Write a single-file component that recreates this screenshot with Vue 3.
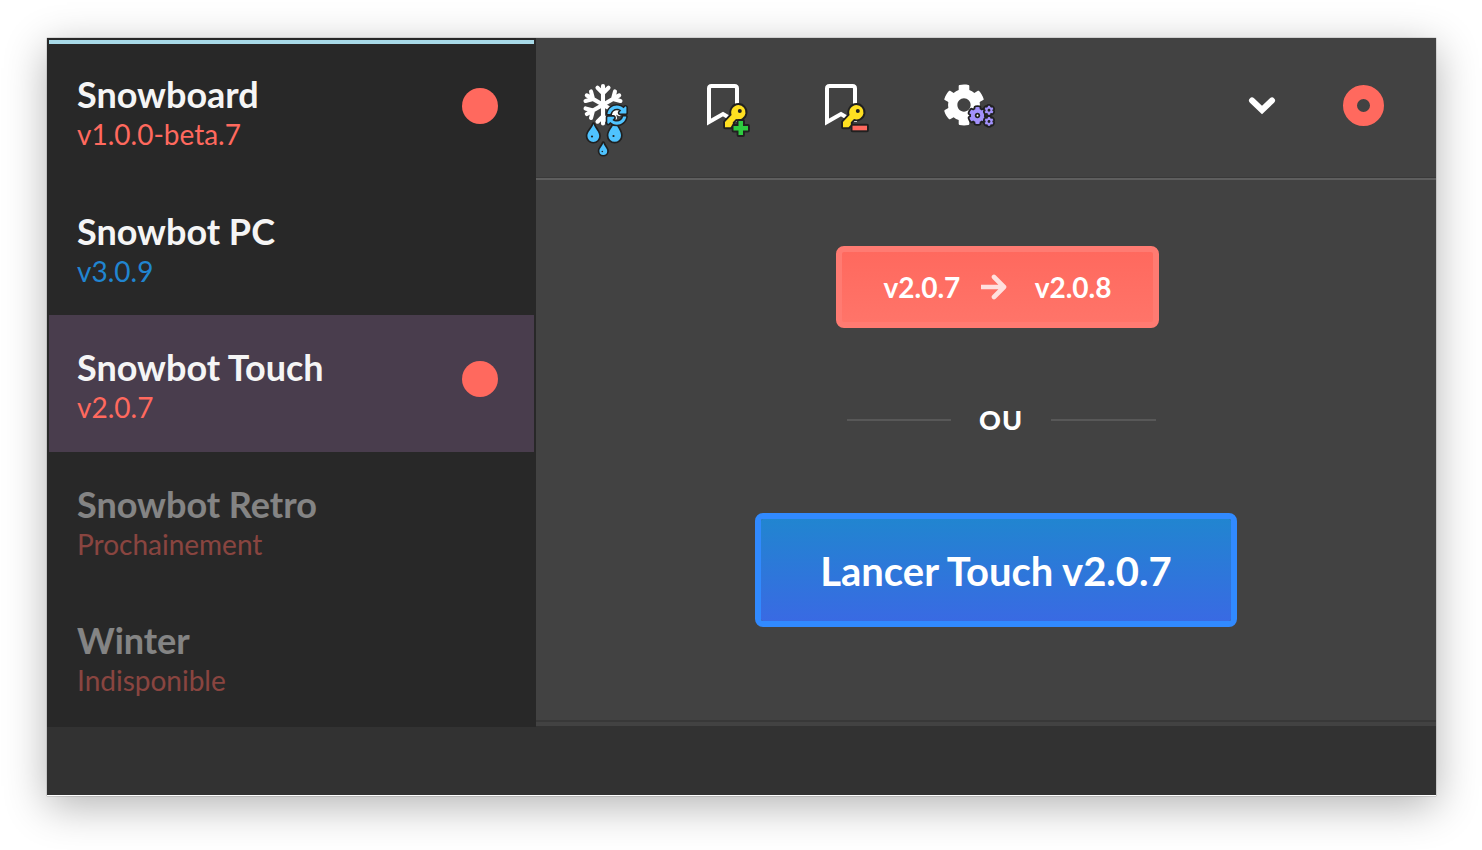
<script setup>
import { ref } from 'vue'

const games = [
  { name: 'Snowboard', version: 'v1.0.0-beta.7', update: true },
  { name: 'Snowbot PC', version: 'v3.0.9', current: true },
  { name: 'Snowbot Touch', version: 'v2.0.7', update: true },
  { name: 'Snowbot Retro', version: 'Prochainement', disabled: true },
  { name: 'Winter', version: 'Indisponible', disabled: true },
]
const selected = ref('Snowbot Touch')

const arms = [0, 60, 120, 180, 240, 300]
const cog =
  'M487.4 315.7l-42.6-24.6c4.3-23.2 4.3-47 0-70.2l42.6-24.6c4.9-2.8 7.1-8.6 5.5-14-11.1-35.6-30-67.8-54.7-94.6-3.8-4.1-10-5.1-14.8-2.3L380.8 110c-17.9-15.4-38.5-27.3-60.8-35.1V25.8c0-5.6-3.9-10.5-9.4-11.7-36.7-8.2-74.3-7.8-109.2 0-5.5 1.2-9.4 6.1-9.4 11.7V75c-22.2 7.9-42.8 19.8-60.8 35.1L88.7 85.5c-4.9-2.8-11-1.9-14.8 2.3-24.7 26.7-43.6 58.9-54.7 94.6-1.7 5.4.6 11.2 5.5 14L67.3 221c-4.3 23.2-4.3 47 0 70.2l-42.6 24.6c-4.9 2.8-7.1 8.6-5.5 14 11.1 35.6 30 67.8 54.7 94.6 3.8 4.1 10 5.1 14.8 2.3l42.6-24.6c17.9 15.4 38.5 27.3 60.8 35.1v49.2c0 5.6 3.9 10.5 9.4 11.7 36.7 8.2 74.3 7.8 109.2 0 5.5-1.2 9.4-6.1 9.4-11.7v-49.2c22.2-7.9 42.8-19.8 60.8-35.1l42.6 24.6c4.9 2.8 11 1.9 14.8-2.3 24.7-26.7 43.6-58.9 54.7-94.6 1.5-5.5-.7-11.3-5.6-14.1zM256 336c-44.1 0-80-35.9-80-80s35.9-80 80-80 80 35.9 80 80-35.9 80-80 80z'
const sync =
  'M370.72 133.28C339.458 104.008 298.888 87.962 255.848 88c-77.458.068-144.328 53.178-162.791 126.85-1.344 5.363-6.122 9.15-11.651 9.15H24.103c-7.498 0-13.194-6.807-11.807-14.176C33.933 94.924 134.813 8 256 8c66.448 0 126.791 26.136 171.315 68.685L463.03 40.97C478.149 25.851 504 36.559 504 57.941V192c0 13.255-10.745 24-24 24H345.941c-21.382 0-32.09-25.851-16.971-40.971l41.75-41.749zM32 296h134.059c21.382 0 32.09 25.851 16.971 40.971l-41.75 41.75c31.262 29.273 71.835 45.319 114.876 45.28 77.418-.07 144.315-53.144 162.787-126.849 1.344-5.363 6.122-9.15 11.651-9.15h57.304c7.498 0 13.194 6.807 11.807 14.176C478.067 417.076 377.187 504 256 504c-66.448 0-126.791-26.136-171.315-68.685L48.97 471.03C33.851 486.149 8 475.441 8 454.059V320c0-13.255 10.745-24 24-24z'
const cogs = [
  { x: 40.5, y: 33.5, s: 0.034 },
  { x: 52, y: 28.3, s: 0.018 },
  { x: 52, y: 39.5, s: 0.018 },
]
</script>

<template>
  <div class="page">
    <div class="window">
      <div class="body">
        <nav class="sidebar">
          <ul class="games">
            <li v-for="g in games" :key="g.name" class="slot">
              <button
                type="button"
                class="game"
                :class="{ active: g.name === selected, current: g.current }"
                :disabled="g.disabled"
                @click="selected = g.name"
              >
                <span class="label">
                  <span class="name">{{ g.name }}</span>
                  <span class="version">{{ g.version }}</span>
                </span>
                <span v-if="g.update" class="dot"></span>
              </button>
            </li>
          </ul>
        </nav>

        <main class="main">
          <header class="toolbar">
            <div class="tools">
              <button type="button" class="tool" aria-label="Vider le cache">
                <svg viewBox="0 0 60 76">
                  <g fill="none" stroke="#fff" stroke-width="4.1" stroke-linecap="round" stroke-linejoin="round">
                    <path
                      v-for="a in arms"
                      :key="a"
                      d="M0 0V-18.700M-5.500-17L0-11.500L5.500-17"
                      :transform="`translate(20 22.7) rotate(${a})`"
                    />
                  </g>
                  <g class="outlined" fill="#4fc3ff" stroke-width="3.4">
                    <path d="M10.5 42C12 47 16.2 49.5 16.2 54a5.9 5.9 0 0 1-11.8 0C4.4 49.5 9 47 10.5 42z" />
                    <path d="M32 39C34 45.5 38 48.5 38 53.5a6.3 6.3 0 0 1-12.6 0C25.4 48.5 30 45.5 32 39z" />
                    <path d="M20.3 61C21.3 64.5 24.2 66.3 24.2 69a3.9 3.9 0 0 1-7.8 0C16.4 66.3 19.3 64.5 20.3 61z" />
                    <path :d="sync" stroke-width="85" transform="translate(24 23.3) scale(.0385)" />
                  </g>
                  <g fill="#202020">
                    <circle cx="9" cy="54.5" r="1.1" />
                    <circle cx="30.5" cy="54" r="1.1" />
                    <circle cx="19.3" cy="69.5" r=".8" />
                  </g>
                </svg>
              </button>
              <button v-for="kind in ['Ajouter', 'Retirer']" :key="kind" type="button" class="tool" :aria-label="kind + ' une clé'">
                <svg viewBox="0 0 60 76">
                  <path
                    d="M36 40V6.5Q36 4 33.5 4H10.5Q8 4 8 6.5V40L22 32L27 35"
                    fill="none"
                    stroke="#fff"
                    stroke-width="4"
                  />
                  <g class="outlined" stroke-width="3.8">
                    <path
                      fill="#ffe021"
                      d="M37.500 23a7.200 7.200 0 1 1-2.500 14L31.800 40.200V43L29.500 45.300H24V40L30.600 33A7.500 7.500 0 0 1 37.500 23z"
                    />
                    <path v-if="kind === 'Ajouter'" fill="#2ecc40" d="M37.5 39H42V44H47V48.5H42V53H37.5V48.5H32.5V44H37.5z" />
                    <rect v-else x="33.5" y="43.7" width="14.5" height="4.6" fill="#ff695e" />
                  </g>
                  <circle cx="38.8" cy="29" r="2" fill="#202020" />
                </svg>
              </button>
              <button type="button" class="tool" aria-label="Paramètres">
                <svg viewBox="0 0 60 76">
                  <path :d="cog" fill="#fff" transform="translate(27 23) scale(.083) translate(-256 -256)" />
                  <g class="outlined" fill="#a291fb">
                    <path
                      v-for="c in cogs"
                      :key="c.y"
                      :d="cog"
                      :stroke-width="3.6 / c.s"
                      :transform="`translate(${c.x} ${c.y}) scale(${c.s}) translate(-256 -256)`"
                    />
                  </g>
                </svg>
              </button>
            </div>
            <button type="button" class="control" aria-label="Réduire">
              <svg class="chevron" viewBox="0 0 30 20">
                <path d="M5 5.500L15 15L25 5.500" fill="none" stroke="#fff" stroke-width="6" stroke-linecap="round" />
              </svg>
            </button>
            <button type="button" class="control" aria-label="Fermer">
              <span class="ring"></span>
            </button>
          </header>

          <section class="content">
            <button type="button" class="update">
              <span>v2.0.7</span>
              <svg class="arrow" viewBox="0 0 26 26">
                <path d="M0 13H21M13 3L23 13L13 23" fill="none" stroke="#ffe0de" stroke-width="4.6" stroke-linejoin="round" stroke-linecap="round" />
              </svg>
              <span>v2.0.8</span>
            </button>
            <div class="divider">OU</div>
            <button type="button" class="launch">Lancer Touch v2.0.7</button>
          </section>
        </main>
      </div>
      <footer class="footer"></footer>
    </div>
  </div>
</template>

<style>
body {
  background: #fff;
}
</style>

<style scoped>
* {
  box-sizing: border-box;
}
button {
  margin: 0;
  padding: 0;
  border: 0;
  background: none;
  font: inherit;
  color: inherit;
  cursor: pointer;
}
svg {
  display: block;
}
.page {
  display: flex;
  min-height: 100vh;
  padding: 38px 46px 54px 47px;
  font-family: Lato, "Liberation Sans", sans-serif;
}
.window {
  display: flex;
  flex: 1;
  flex-direction: column;
  background: #323232;
  border-bottom: 1px solid #fff;
  box-shadow: 0 0 1px rgba(0, 0, 0, 0.6), 0 10px 40px rgba(0, 0, 0, 0.3);
}
.body {
  display: grid;
  flex: 1;
  grid-template-columns: 489fr 900fr;
}
.sidebar {
  display: flex;
  padding: 4px 2px 2px;
  background: #282828;
}
.games {
  display: flex;
  flex: 1;
  flex-direction: column;
  margin: 0;
  padding: 0;
  list-style: none;
}
.slot {
  display: flex;
  flex: 1;
}
.slot:first-child {
  box-shadow: 0 -2px 0 #a8dae8, inset 0 2px 0 #a8dae8;
}
.game {
  display: flex;
  flex: 1;
  align-items: flex-start;
  justify-content: space-between;
  padding: 30px 36px 20px 28px;
  text-align: left;
}
.game.active {
  background: #493d4d;
}
.game:disabled {
  opacity: 0.45;
  cursor: default;
}
.name,
.version {
  display: block;
}
.name {
  font-size: 36px;
  font-weight: 700;
  line-height: 44px;
  color: #f5f5f5;
}
.version {
  font-size: 28px;
  line-height: 36px;
  color: #ff695e;
}
.current .version {
  color: #2185d0;
}
.dot {
  width: 36px;
  height: 36px;
  margin-top: 16px;
  border-radius: 50%;
  background: #ff695e;
}
.main {
  display: flex;
  flex-direction: column;
  margin-bottom: 1px;
  background: #424242;
}
.toolbar {
  display: flex;
  align-items: flex-start;
  height: 142px;
  padding: 44px 51px 0 47px;
  border-bottom: 2px solid #5e5e5e;
  box-shadow: inset 0 -1px 0 #393939;
}
.tools {
  display: flex;
  flex: 1;
  gap: 58px;
}
.tool,
.tool svg {
  width: 60px;
  height: 76px;
}
.outlined {
  stroke: #202020;
  stroke-linejoin: round;
  paint-order: stroke;
}
.control {
  display: flex;
  align-items: center;
  justify-content: center;
  width: 44px;
  height: 46px;
}
.control + .control {
  margin-left: 57px;
}
.chevron {
  width: 30px;
  height: 20px;
}
.ring {
  width: 41px;
  height: 41px;
  border: 14px solid #ff695e;
  border-radius: 50%;
}
.content {
  display: flex;
  flex: 1;
  flex-direction: column;
  align-items: center;
  gap: 75px;
  margin-bottom: 4px;
  padding: 66px 0 40px 20px;
  border-bottom: 2px solid #383838;
}
.update {
  display: flex;
  align-items: center;
  justify-content: space-between;
  width: 323px;
  height: 82px;
  margin-left: 2px;
  padding: 0 41px 0 42px;
  border: 6px solid #ff7b72;
  border-radius: 8px;
  background: linear-gradient(#ff695e, #ff7469);
  font-size: 28px;
  font-weight: 700;
  color: #fff;
}
.arrow {
  width: 26px;
  height: 26px;
  margin-right: 8px;
}
.divider {
  display: flex;
  align-items: center;
  gap: 28px;
  width: 309px;
  height: 35px;
  margin-left: 10px;
  padding-bottom: 1px;
  font-size: 27px;
  font-weight: 900;
  line-height: 34px;
  letter-spacing: 1px;
  color: #fff;
}
.divider::before,
.divider::after {
  content: "";
  flex: 1;
  height: 2px;
  background: #585858;
}
.launch {
  width: 482px;
  height: 114px;
  padding-top: 2px;
  border: 6px solid #318aff;
  border-radius: 8px;
  background: linear-gradient(#2185d0, #396ae3);
  background-clip: padding-box;
  font-size: 40px;
  font-weight: 700;
  color: #fff;
}
.footer {
  height: 68px;
}
</style>
